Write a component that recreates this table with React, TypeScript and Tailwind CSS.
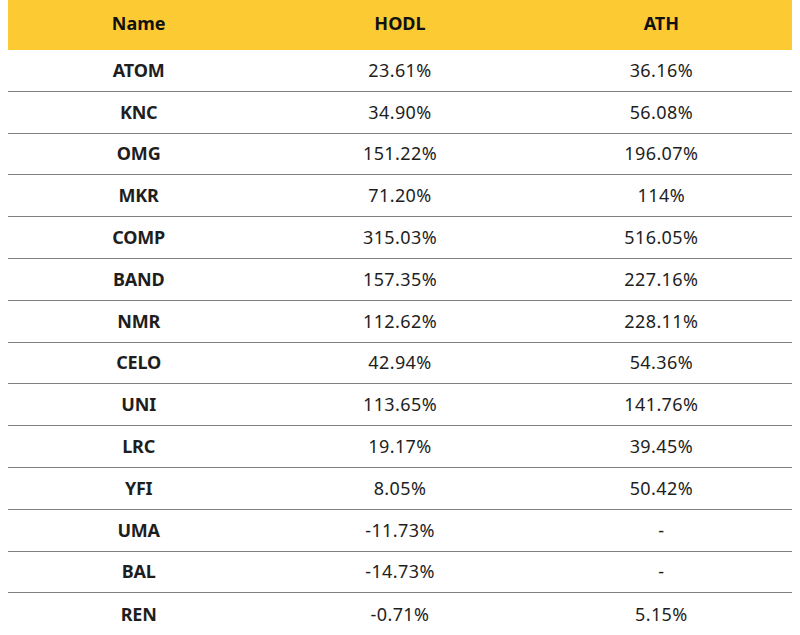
const rows: [string, string, string][] = [
  ["ATOM", "23.61%", "36.16%"],
  ["KNC", "34.90%", "56.08%"],
  ["OMG", "151.22%", "196.07%"],
  ["MKR", "71.20%", "114%"],
  ["COMP", "315.03%", "516.05%"],
  ["BAND", "157.35%", "227.16%"],
  ["NMR", "112.62%", "228.11%"],
  ["CELO", "42.94%", "54.36%"],
  ["UNI", "113.65%", "141.76%"],
  ["LRC", "19.17%", "39.45%"],
  ["YFI", "8.05%", "50.42%"],
  ["UMA", "-11.73%", "-"],
  ["BAL", "-14.73%", "-"],
  ["REN", "-0.71%", "5.15%"],
];

export default function App() {
  return (
    <main className="w-[800px] h-[635px] overflow-hidden bg-white px-2 font-['Noto_Sans',sans-serif] text-[#1e1e1e]">
      {/* Header */}
      <div className="grid grid-cols-3 h-[50px] items-center pb-1 bg-[#fcca33] text-[18px] font-bold text-center text-[#111]">
        <div>Name</div>
        <div>HODL</div>
        <div>ATH</div>
      </div>
      {rows.map(([name, hodl, ath], i) => (
        <div
          key={name}
          className={
            "grid grid-cols-3 h-[41.8px] items-center text-center text-[18px] " +
            (i < rows.length - 1 ? "border-b-[1.5px] border-[#808080]" : "")
          }
        >
          <div className="font-bold tracking-[-0.2px]">{name}</div>
          <div className="tracking-[0.4px]">{hodl}</div>
          <div className="tracking-[0.4px]">{ath}</div>
        </div>
      ))}
    </main>
  );
}
